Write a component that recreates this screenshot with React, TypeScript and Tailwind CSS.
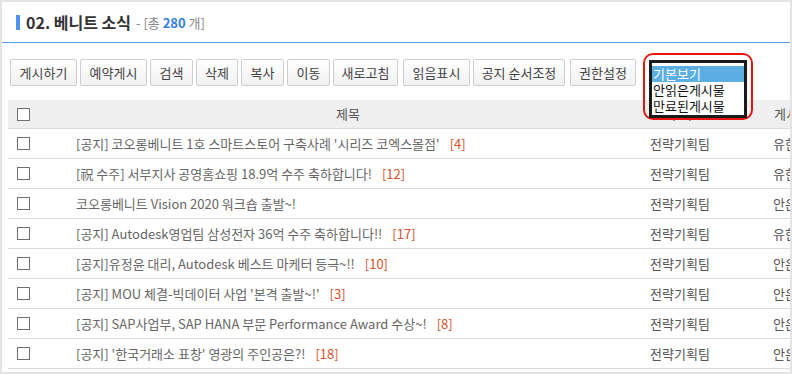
import React from "react";

const buttons = [
  { label: "게시하기", cls: "w-[67px]" },
  { label: "예약게시", cls: "w-[67px] ml-[3px]" },
  { label: "검색", cls: "w-[43px] ml-[3px]" },
  { label: "삭제", cls: "w-[42px] ml-[3px]" },
  { label: "복사", cls: "w-[43px] ml-[3px]" },
  { label: "이동", cls: "w-[43px] ml-[3px]" },
  { label: "새로고침", cls: "w-[65px] ml-[3px]" },
  { label: "읽음표시", cls: "w-[67px] ml-[5px]" },
  { label: "공지 순서조정", cls: "w-[92px] ml-[3px]" },
  { label: "권한설정", cls: "w-[66px] ml-[5px]" },
];

const rows = [
  { title: "[공지] 코오롱베니트 1호 스마트스토어 구축사례 '시리즈 코엑스몰점'", count: "[4]", state: "유한" },
  { title: "[祝 수주] 서부지사 공영홈쇼핑 18.9억 수주 축하합니다!", count: "[12]", state: "유한" },
  { title: "코오롱베니트 Vision 2020 워크숍 출발~!", count: "", state: "안온" },
  { title: "[공지] Autodesk영업팀 삼성전자 36억 수주 축하합니다!!", count: "[17]", state: "유한" },
  { title: "[공지]유정윤 대리, Autodesk 베스트 마케터 등극~!!", count: "[10]", state: "안온" },
  { title: "[공지] MOU 체결-빅데이터 사업 '본격 출발~!'", count: "[3]", state: "안온" },
  { title: "[공지] SAP사업부, SAP HANA 부문 Performance Award 수상~!", count: "[8]", state: "안온" },
  { title: "[공지] '한국거래소 표창' 영광의 주인공은?!", count: "[18]", state: "안온" },
];

function Box() {
  return <div className="w-[13px] h-[13px] border border-[#707070] bg-white" />;
}

export default function App() {
  return (
    <div
      className="relative w-[792px] h-[374px] overflow-hidden bg-white border-2 border-[#e4e4e4]"
      style={{ fontFamily: '"Noto Sans CJK KR", "Liberation Sans", sans-serif' }}
    >
      {/* title */}
      <div className="h-[41px] flex items-center pl-[14px] border-b border-[#5b9cf5]">
        <div className="w-[4px] h-[15px] bg-[#4f93f0]" />
        <span className="ml-[6px] text-[16px] font-bold text-[#333] leading-none">02. 베니트 소식</span>
        <span className="ml-[5px] text-[13px] text-[#888] leading-none">
          - [총 <span className="text-[#2f7fe8] font-semibold">280</span> 개]
        </span>
      </div>

      {/* buttons */}
      <div className="flex mt-[16px] pl-[8px]">
        {buttons.map((b) => (
          <div
            key={b.label}
            className={`${b.cls} h-[27px] flex items-center justify-center rounded-[2px] border border-[#cfcfcf] bg-gradient-to-b from-white to-[#f1f1f1] text-[13px] text-[#444] whitespace-nowrap`}
          >
            {b.label}
          </div>
        ))}
      </div>

      {/* table */}
      <div className="mt-[14px] ml-[6px] w-[900px]">
        <div className="flex h-[29px] bg-[#efefef] border-b border-[#dcdcdc] items-center text-[13px] text-[#555]">
          <div className="w-[52px] pl-[9px] flex items-center"><Box /></div>
          <div className="w-[576px] text-center">제목</div>
          <div className="w-[88px] text-center">부서</div>
          <div className="pl-[50px]">게시</div>
        </div>
        {rows.map((r, i) => (
          <div key={i} className="flex h-[30px] border-b border-[#dcdcdc] items-center text-[13px] text-[#666]">
            <div className="w-[52px] pl-[9px] flex items-center"><Box /></div>
            <div className="w-[576px] pl-[16px] whitespace-nowrap">
              {r.title}
              {r.count && <span className="ml-[10px] text-[#d4532b]">{r.count}</span>}
            </div>
            <div className="w-[88px] text-center text-[#555]">전략기획팀</div>
            <div className="pl-[49px] text-[#555]">{r.state}</div>
          </div>
        ))}
      </div>

      {/* list select overlay */}
      <div className="absolute left-[641px] top-[51px] w-[110px] h-[67px] rounded-[10px] border-2 border-[#e8140f]" />
      <div className="absolute left-[647px] top-[58px] w-[98px] h-[58px] border-[3px] border-[#1a1a1a] bg-white pt-[3px] text-[13px] leading-[16px] text-[#111]">
        <div className="bg-[#5aaee2] text-white pl-[1px]">기본보기</div>
        <div className="pl-[1px]">안읽은게시물</div>
        <div className="pl-[1px]">만료된게시물</div>
      </div>
    </div>
  );
}
